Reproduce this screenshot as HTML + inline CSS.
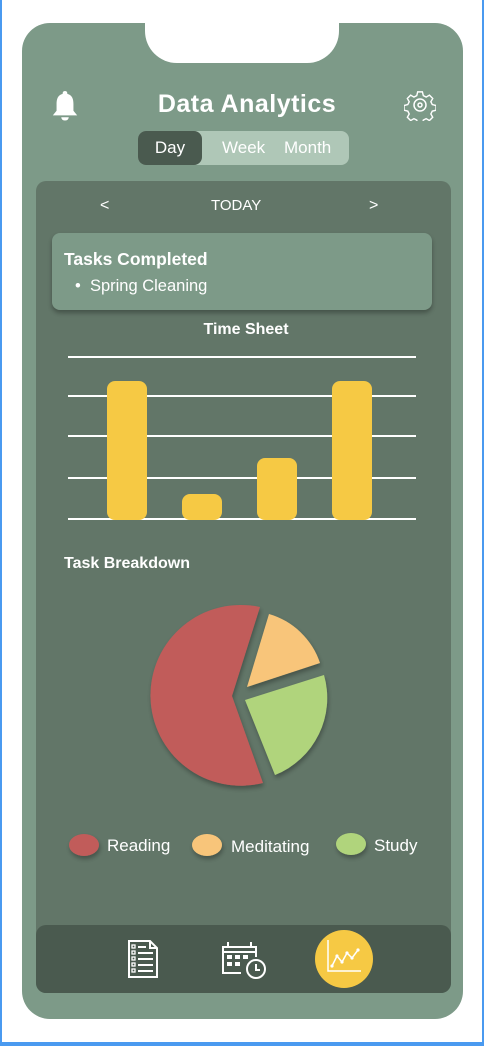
<!DOCTYPE html>
<html><head><style>
*{margin:0;padding:0;box-sizing:border-box}
body{width:484px;height:1046px;background:#fff;position:relative;overflow:hidden;font-family:"Liberation Sans",sans-serif;color:#fff}
.a{position:absolute}
</style></head><body>
<div class="a" style="left:0;top:0;width:2px;height:1046px;background:#4a9af0"></div>
<div class="a" style="left:482px;top:0;width:2px;height:1046px;background:#4a9af0"></div>
<div class="a" style="left:0;top:1042px;width:484px;height:4px;background:#4a9af0"></div>
<div class="a" style="left:22px;top:23px;width:441px;height:996px;background:#7d9a88;border-radius:28px"></div>
<div class="a" style="left:145px;top:0;width:194px;height:63px;background:#fff;border-radius:0 0 32px 32px"></div>
<svg class="a" style="left:50px;top:89px" width="30" height="34" viewBox="0 0 32 36"><path d="M16 2c-2 0-2.5 1.5-2.5 3C8 6.5 7 11 7 16v7l-4 5h26l-4-5v-7c0-5-1-9.5-6.5-11C18.5 3.5 18 2 16 2z" fill="#fff"/><path d="M12 30a4 3.5 0 0 0 8 0z" fill="#fff"/></svg>
<div class="a" style="left:0;width:494px;top:90px;text-align:center;font-size:25px;font-weight:bold;letter-spacing:0.5px">Data Analytics</div>
<svg class="a" style="left:404px;top:89px" width="32" height="32" viewBox="0 0 32 32"><g fill="none" stroke="#fff" stroke-width="1.5"><path d="M13.5 2h5l1 4 3 1.5 3.5-2 3.5 3.5-2 3.5 1.5 3 4 1v5l-4 1-1.5 3 2 3.5-3.5 3.5-3.5-2-3 1.5-1 4h-5l-1-4-3-1.5-3.5 2-3.5-3.5 2-3.5-1.5-3-4-1v-5l4-1 1.5-3-2-3.5 3.5-3.5 3.5 2 3-1.5z" transform="translate(1 1) scale(0.94)"/><circle cx="16" cy="16" r="6"/><circle cx="16" cy="16" r="2"/></g></svg>
<div class="a" style="left:138px;top:131px;width:211px;height:34px;background:#afc7b7;border-radius:8px"></div>
<div class="a" style="left:138px;top:131px;width:64px;height:34px;background:#4a5a4f;border-radius:8px;font-size:17px;line-height:34px;text-align:center">Day</div>
<div class="a" style="left:222px;top:131px;font-size:17px;line-height:34px">Week</div>
<div class="a" style="left:284px;top:131px;font-size:17px;line-height:34px">Month</div>
<div class="a" style="left:36px;top:181px;width:415px;height:812px;background:#627668;border-radius:10px"></div>
<div class="a" style="left:100px;top:197px;font-size:16px">&lt;</div>
<div class="a" style="left:211px;top:197px;font-size:15px">TODAY</div>
<div class="a" style="left:369px;top:197px;font-size:16px">&gt;</div>
<div class="a" style="left:52px;top:233px;width:380px;height:77px;background:#7d9a88;border-radius:8px;box-shadow:0 3px 5px rgba(0,0,0,.3)"></div>
<div class="a" style="left:64px;top:249px;font-size:17.5px;font-weight:bold">Tasks Completed</div>
<div class="a" style="left:75px;top:277px;font-size:16.5px">•&nbsp; Spring Cleaning</div>
<div class="a" style="left:0;width:492px;top:321px;text-align:center;font-size:16px;font-weight:bold">Time Sheet</div>
<svg class="a" style="left:0;top:0" width="484" height="1046">
<g stroke="#fff" stroke-width="2"><line x1="68" y1="357" x2="416" y2="357"/><line x1="68" y1="396" x2="416" y2="396"/><line x1="68" y1="436" x2="416" y2="436"/><line x1="68" y1="478" x2="416" y2="478"/><line x1="68" y1="519" x2="416" y2="519"/></g>
<g fill="#f6c944"><rect x="107" y="381" width="40" height="139" rx="8"/><rect x="182" y="494" width="40" height="26" rx="8"/><rect x="257" y="458" width="40" height="62" rx="8"/><rect x="332" y="381" width="40" height="139" rx="8"/></g>
<defs><filter id="s" x="-20%" y="-20%" width="140%" height="140%"><feDropShadow dx="1" dy="3" stdDeviation="2.5" flood-color="#000" flood-opacity=".3"/></filter></defs>
<g filter="url(#s)">
<path d="M232 696 L260 607 A90.4 90.4 0 1 0 263 783 Z" fill="#c15b5a"/>
<path d="M247 687 L269 614 A76 76 0 0 1 320 663 Z" fill="#f8c57a"/>
<path d="M245 700 L324 675 A83 83 0 0 1 275 775 Z" fill="#b0d47c"/>
<ellipse cx="84" cy="845" rx="15" ry="11" fill="#c15b5a"/>
<ellipse cx="207" cy="845" rx="15" ry="11" fill="#f8c57a"/>
<ellipse cx="351" cy="844" rx="15" ry="11" fill="#b0d47c"/>
</g>
</svg>
<div class="a" style="left:64px;top:555px;font-size:16px;font-weight:bold">Task Breakdown</div>
<div class="a" style="left:107px;top:836px;font-size:17px">Reading</div>
<div class="a" style="left:231px;top:837px;font-size:17px">Meditating</div>
<div class="a" style="left:374px;top:836px;font-size:17px">Study</div>
<div class="a" style="left:36px;top:925px;width:415px;height:68px;background:#4a5a4f;border-radius:10px"></div>
<svg class="a" style="left:0;top:0" width="484" height="1046">
<g fill="none" stroke="#fff" stroke-width="2">
<path d="M129 941h21l7 7v29h-28z"/><path d="M150 941v7h7"/>
<g stroke-width="1.3"><rect x="132" y="945" width="3" height="3"/><rect x="132" y="951" width="3" height="3"/><rect x="132" y="957" width="3" height="3"/><rect x="132" y="963" width="3" height="3"/><rect x="132" y="969" width="3" height="3"/></g>
<path d="M138 947h8M138 953h15M138 959h15M138 965h15M138 971h15"/>
<path d="M241 973h-18v-26h33v10"/><path d="M223 952h33"/><path d="M228 942v6M251 942v6"/>
<circle cx="256" cy="969" r="9"/><path d="M256 964v6h4"/>
</g>
<g fill="#fff"><rect x="227" y="955" width="5" height="4"/><rect x="235" y="955" width="5" height="4"/><rect x="243" y="955" width="5" height="4"/><rect x="227" y="962" width="5" height="4"/><rect x="235" y="962" width="5" height="4"/></g>
<circle cx="344" cy="959" r="29" fill="#f6c944"/>
<g fill="none" stroke="#fff" stroke-width="1.5"><path d="M328 940v31h33"/><path d="M332 966l5-10 5 6 5-9 5 5 6-8"/></g>
<g fill="#fff"><circle cx="332" cy="966" r="1.6"/><circle cx="337" cy="956" r="1.6"/><circle cx="342" cy="962" r="1.6"/><circle cx="347" cy="953" r="1.6"/><circle cx="352" cy="958" r="1.6"/><circle cx="358" cy="950" r="1.6"/></g>
</svg>
</body></html>
